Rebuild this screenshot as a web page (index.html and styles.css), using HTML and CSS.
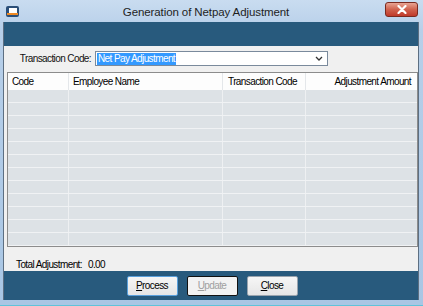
FILE: index.html
```html
<!DOCTYPE html>
<html lang="en">
<head>
    <meta charset="UTF-8">
    <title>Generation of Netpay Adjustment</title>
    <link rel="stylesheet" href="styles.css">
</head>
<body>
    <div class="window">
        <div class="titlebar">
            <div class="app-icon">
                <svg width="16" height="14" viewBox="0 0 16 14">
                    <rect x="1" y="1" width="13" height="11" rx="2" fill="#2b4f78"/>
                    <rect x="4" y="3" width="8" height="5" fill="#ffffff"/>
                    <rect x="2" y="8" width="11" height="2" fill="#f08a24"/>
                </svg>
            </div>
            <div class="title">Generation of Netpay Adjustment</div>
            <div class="close-btn">
                <svg width="10" height="9" viewBox="0 0 10 9">
                    <path d="M1.5 1 L8.5 8 M8.5 1 L1.5 8" stroke="#ffffff" stroke-width="2.2" stroke-linecap="round"/>
                </svg>
            </div>
        </div>

        <div class="client">
            <div class="band"></div>

            <div class="main">
                <div class="filter-row">
                    <label class="filter-label">Transaction Code:</label>
                    <div class="combo">
                        <span class="combo-value">Net Pay Adjustment</span>
                        <svg class="combo-arrow" width="8" height="5" viewBox="0 0 8 5">
                            <path d="M1 1 L4 4 L7 1" stroke="#333" stroke-width="1.3" fill="none"/>
                        </svg>
                    </div>
                </div>

                <div class="grid">
                    <div class="grid-row grid-head">
                        <div class="cell c-code">Code</div>
                        <div class="cell c-name">Employee Name</div>
                        <div class="cell c-trans">Transaction Code</div>
                        <div class="cell c-amount">Adjustment Amount</div>
                    </div>
                    <div id="rows"></div>
                </div>

                <div class="total-row">
                    <span>Total Adjustment:</span>
                    <span class="total-value">0.00</span>
                </div>
            </div>

            <div class="footer">
                <button class="btn"><u>P</u>rocess</button>
                <button class="btn btn-default" disabled><u>U</u>pdate</button>
                <button class="btn"><u>C</u>lose</button>
            </div>
        </div>
    </div>

    <script>
        // Empty grid rows
        const rows = document.getElementById('rows');
        for (let i = 0; i < 12; i++) {
            const row = document.createElement('div');
            row.className = 'grid-row';
            ['c-code', 'c-name', 'c-trans', 'c-amount'].forEach(c => {
                const cell = document.createElement('div');
                cell.className = 'cell ' + c;
                row.appendChild(cell);
            });
            rows.appendChild(row);
        }
    </script>
</body>
</html>
```

FILE: styles.css
```css
body {
    margin: 0;
    font-family: 'Liberation Sans', Arial, sans-serif;
    font-size: 10px;
    letter-spacing: -0.6px;
    color: #000;
}

.window {
    width: 423px;
    height: 306px;
    box-sizing: border-box;
    display: flex;
    flex-direction: column;
    background: linear-gradient(#c9dcf0, #b7cfe9 30px, #a9c6e4);
    padding: 0 3px 5px 3px;
    border-bottom: 1px solid #5fc3da;
}

.titlebar {
    height: 22px;
    display: flex;
    align-items: center;
}

.app-icon {
    width: 16px;
    height: 14px;
    margin-left: 2px;
    margin-top: 2px;
}

.title {
    flex: 1;
    text-align: center;
    font-family: 'Liberation Sans', Arial, sans-serif;
    font-size: 11.5px;
    letter-spacing: -0.1px;
    color: #1e1e1e;
    padding-left: 6px;
    margin-top: 2px;
}

.close-btn {
    width: 33px;
    height: 15px;
    margin-top: -4px;
    margin-right: 2px;
    border: 1px solid #7a2a20;
    border-radius: 3px;
    background: linear-gradient(#e8a493, #d0624e 50%, #c0392a);
    display: flex;
    align-items: center;
    justify-content: center;
    box-sizing: border-box;
}

.client {
    flex: 1;
    display: flex;
    flex-direction: column;
    border-left: 1px solid #5d6f82;
    border-right: 1px solid #5d6f82;
    margin-right: 1px;
}

.band {
    height: 24px;
    background: #285a7d;
}

.main {
    flex: 1;
    background: #f0f0f0;
    display: flex;
    flex-direction: column;
    padding: 5px 0 0 3px;
}

.filter-row {
    display: flex;
    align-items: center;
    height: 15px;
}

.filter-label {
    width: 84px;
    text-align: right;
    padding-right: 4px;
    color: #111;
}

.combo {
    width: 233px;
    height: 15px;
    box-sizing: border-box;
    border: 1px solid #7a8a9c;
    background: #fff;
    display: flex;
    align-items: center;
    justify-content: space-between;
    padding: 0 4px 0 1px;
}

.combo-value {
    background: #3399ff;
    color: #fff;
    padding: 0 1px;
    line-height: 12px;
}

.grid {
    margin-top: 6px;
    height: 175px;
    box-sizing: border-box;
    border: 1px solid #8c8c8c;
    background: #dde2e6;
    overflow: hidden;
}

.grid-row {
    display: flex;
    height: 13px;
    box-sizing: border-box;
    border-bottom: 1px solid #f0f2f4;
}

.grid-head {
    height: 17px;
    background: #fdfdfd;
    border-bottom: none;
}

.cell {
    box-sizing: border-box;
    border-right: 1px solid #eef0f2;
    padding: 0 3px;
    line-height: 17px;
    white-space: nowrap;
}

.grid-head .cell {
    border-right-color: #e4e7ea;
}

.c-code { width: 61px; padding-left: 4px; }
.c-name { width: 154px; padding-left: 4px; }
.c-trans { width: 83px; padding-left: 5px; }
.c-amount { flex: 1; text-align: right; border-right: none; padding-right: 6px; }

.total-row {
    flex: 1;
    display: flex;
    align-items: center;
    gap: 6px;
    padding-left: 9px;
    padding-top: 10px;
}

.footer {
    height: 29px;
    background: #285a7d;
    display: flex;
    justify-content: center;
    align-items: center;
    gap: 9px;
    padding-left: 2px;
}

.btn {
    width: 51px;
    height: 20px;
    font-family: 'Liberation Sans', Arial, sans-serif;
    font-size: 10px;
    letter-spacing: -0.6px;
    border: 1px solid #9aa4ae;
    border-radius: 2px;
    background: linear-gradient(#f6f6f6, #e6e6e6);
    color: #000;
    padding: 0;
}

.btn:first-child {
    border-color: #5aa0dc;
}

.btn-default {
    border: 1px solid #111;
    background: #f2f2f2;
    color: #a0a0a0;
}
```
